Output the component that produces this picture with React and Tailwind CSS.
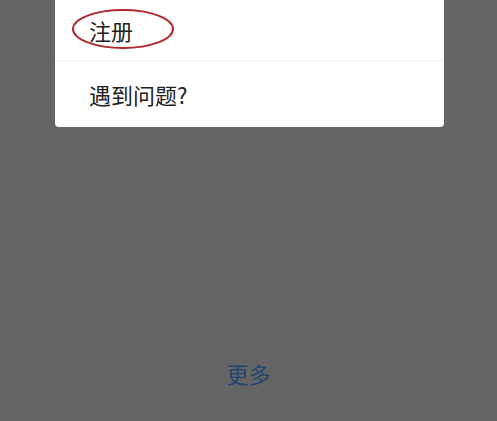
import React from "react";

const font = { fontFamily: '"Noto Sans CJK SC", "Noto Sans", sans-serif' };

const App = () => {
  return (
    <div
      className="h-[421px] w-[497px] bg-[#656565] flex flex-col overflow-hidden"
      style={font}
    >
      <div className="ml-[55px] w-[389px] bg-white rounded-b-[4px]">
        {/* register row, circled in red */}
        <div className="relative h-[60px] flex items-center pl-[34px]">
          <span className="text-[22px] leading-[22px] text-[#222]">注册</span>
          <svg
            className="absolute left-[16px] top-[8px]"
            width="104"
            height="42"
            viewBox="0 0 104 42"
          >
            <ellipse
              cx="52"
              cy="21"
              rx="50"
              ry="19"
              fill="none"
              stroke="#b3272d"
              strokeWidth="2"
            />
          </svg>
        </div>
        <div className="h-px bg-[#efefef]" />
        <div className="h-[66px] flex items-center pl-[34px]">
          <span className="text-[22px] leading-[22px] text-[#222]">遇到问题?</span>
        </div>
      </div>
      <div className="mt-[235px] text-center text-[22px] leading-[22px] text-[#21476e]">
        更多
      </div>
    </div>
  );
};

export default App;
